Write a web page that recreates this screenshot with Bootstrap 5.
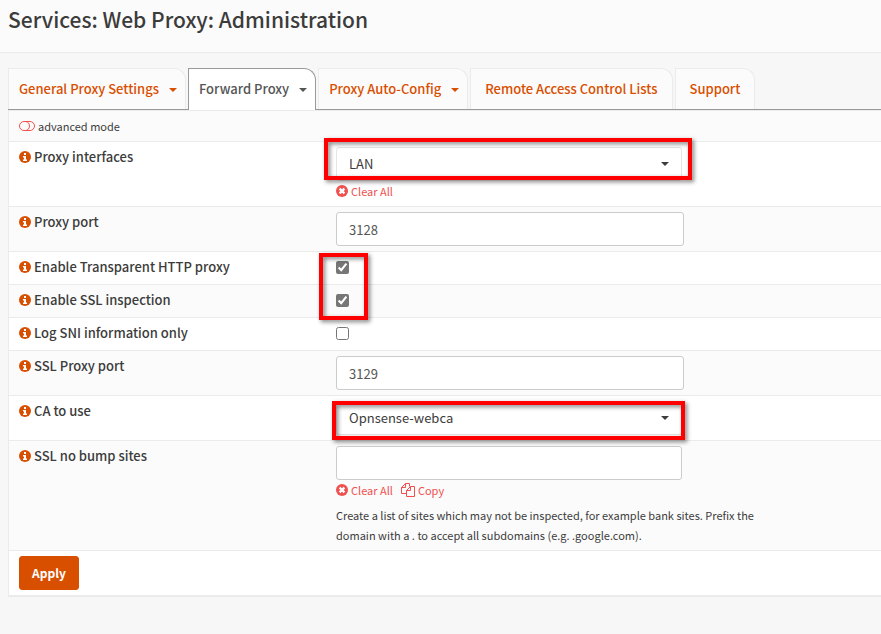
<!DOCTYPE html>
<html lang="en">
<head>
<meta charset="utf-8">
<meta name="viewport" content="width=device-width, initial-scale=1">
<title>Services: Web Proxy: Administration</title>
<link href="https://cdn.jsdelivr.net/npm/bootstrap@5.3.0/dist/css/bootstrap.min.css" rel="stylesheet">
<style>
:root { --brand: #d94f00; --danger-link: #f0504f; --line: #ebebeb; --ink: #3c3c3b; }
body { font-family: "Source Sans Pro", "Noto Sans CJK SC", sans-serif; font-size: 13px; line-height: 20px; color: var(--ink); background: #f7f7f7; overflow-x: hidden; }
.page-head { background: #fbfbfb; border-bottom: 1px solid var(--line); padding: 3px 8px 17px; }
.page-head h1 { font-size: 21px; line-height: 32px; font-weight: 500; }
.page-main { padding: 15px 0 0 8px; }
.page-tabs { gap: 2px; border-bottom: 1px solid #999; }
.page-tabs .nav-link { font-size: 13px; font-weight: 500; line-height: 20px; color: var(--brand); background: #fbfbfb; border: 1px solid var(--line); border-bottom: 0; border-radius: 0 12px 0 0; padding: 10px 14px; margin-bottom: 0; }
.page-tabs .nav-link.dropdown-toggle { padding-left: 10px; padding-right: 8px; }
.page-tabs .nav-link.active { color: #555; background: #fff; border-color: #999; padding-bottom: 11px; margin-bottom: -1px; }
.page-tabs .dropdown-toggle::after { margin-left: 10px; vertical-align: 2px; border-width: 4px 4px 0; }
.panel { background: #fff; border-left: 1px solid var(--line); border-bottom: 2px solid var(--line); }
.settings { --bs-table-bg: transparent; color: var(--ink); }
.settings > tbody > tr > * { padding: 5px 10px; border-top: 1px solid var(--line); border-bottom: 0; font-weight: 400; color: var(--ink); background: none; box-shadow: none; }
.settings > tbody > tr > th { font-weight: 500; }
.settings > tbody > tr:nth-child(odd) { background: #fbfbfb; }
.settings > tbody > tr:nth-child(even) { background: #fff; }
.label-col { width: 317px; }
.icon-row { display: flex; align-items: center; gap: 3px; width: fit-content; }
.small-text, .small-link { font-size: 11px; line-height: 20px; }
.small-link { color: var(--danger-link); text-decoration: none; }
.field { width: 348px; max-width: 100%; }
.field-narrow { width: 346px; }
.field .form-control, .field .form-select { height: 34px; font-size: 13px; line-height: 20px; padding: 6px 12px; color: #555; border: 1px solid #ccc; border-radius: 3px; background-color: #fff; }
.field .form-select { color: var(--ink); border-color: #e5e5e5; background-image: url("data:image/svg+xml,%3Csvg xmlns='http://www.w3.org/2000/svg' viewBox='0 0 8 4'%3E%3Cpath fill='%233c3c3b' d='M0 0h8L4 4z'/%3E%3C/svg%3E"); background-size: 8px 4px; background-position: right 12px center; }
.tick { height: 22px; padding-bottom: 1px; }
.tick input { width: 13px; height: 13px; margin: 0; accent-color: #767676; }
.callout-box { position: absolute; border: 4px solid #f00; filter: drop-shadow(2px 2px 2px rgba(0,0,0,.5)); pointer-events: none; }
.callout-lan { inset: -9px -10px 1px -12px; }
.callout-ticks { top: -4px; left: -17px; width: 49px; height: 67px; }
.callout-ca { inset: 0 -3px -5px -4px; }
.help-text { max-width: 425px; margin-top: 5px; }
.btn-apply { --bs-btn-bg: #d94f00; --bs-btn-border-color: #d94f00; --bs-btn-color: #fff; --bs-btn-hover-bg: #b84300; --bs-btn-hover-color: #fff; --bs-btn-font-size: 12px; --bs-btn-font-weight: 700; --bs-btn-line-height: 20px; --bs-btn-padding-y: 6px; --bs-btn-padding-x: 12px; --bs-btn-border-radius: 3px; display: block; }
svg { flex: none; }
</style>
<script src="https://cdn.jsdelivr.net/npm/bootstrap@5.3.0/dist/js/bootstrap.bundle.min.js"></script>
</head>
<body>
<svg class="d-none" aria-hidden="true">
  <symbol id="i-info" viewBox="0 0 12 12"><circle cx="6" cy="6" r="6" fill="#d94f00"/><path fill="#fff" d="M5 2h2v2H5zM4 5h3v3.500h1V10H4V8.500h1v-2H4z"/></symbol>
  <symbol id="i-clear" viewBox="0 0 12 12"><circle cx="6" cy="6" r="6" fill="#f0504f"/><path stroke="#fff" stroke-width="2.200" d="M3.600 3.600l4.800 4.800M8.400 3.600L3.600 8.400"/></symbol>
  <symbol id="i-copy" viewBox="0 0 14 14"><g fill="none" stroke="#f0504f"><path d="M5.500 10.500h-5v-6l4-4h4v3M4.500.5v4h-4M9.500 3.500h4v10h-8v-6zM9.500 3.500v4h-4"/></g></symbol>
  <symbol id="i-toggle" viewBox="0 0 16 10"><g fill="none" stroke="#f0504f"><rect x=".5" y=".5" width="15" height="9" rx="4.500"/><path d="M5.500.5h1a4 4.500 0 0 1 0 9h-1"/></g></symbol>
</svg>

<header class="page-head"><h1 class="m-0">Services: Web Proxy: Administration</h1></header>

<main class="page-main">
  <ul class="nav nav-tabs page-tabs">
    <li class="nav-item dropdown"><a class="nav-link dropdown-toggle" href="#" role="button" data-bs-toggle="dropdown">General Proxy Settings</a></li>
    <li class="nav-item dropdown"><a class="nav-link dropdown-toggle active" href="#" role="button" aria-current="page" data-bs-toggle="dropdown">Forward Proxy</a></li>
    <li class="nav-item dropdown"><a class="nav-link dropdown-toggle" href="#" role="button" data-bs-toggle="dropdown">Proxy Auto-Config</a></li>
    <li class="nav-item"><a class="nav-link" href="#">Remote Access Control Lists</a></li>
    <li class="nav-item"><a class="nav-link" href="#">Support</a></li>
  </ul>

  <form class="panel">
    <table class="table settings m-0">
      <colgroup><col class="label-col"><col></colgroup>
      <tbody>
        <tr><td colspan="2"><a href="#" class="icon-row small-text text-reset text-decoration-none"><svg width="16" height="10"><use href="#i-toggle"/></svg>advanced mode</a></td></tr>
        <tr>
          <th scope="row"><label class="icon-row" for="ifs"><svg width="12" height="12"><use href="#i-info"/></svg>Proxy interfaces</label></th>
          <td>
            <div class="field field-narrow position-relative"><select id="ifs" class="form-select"><option>LAN</option></select><span class="callout-box callout-lan"></span></div>
            <a href="#" class="small-link icon-row"><svg width="12" height="12"><use href="#i-clear"/></svg>Clear All</a>
          </td>
        </tr>
        <tr>
          <th scope="row"><label class="icon-row" for="port"><svg width="12" height="12"><use href="#i-info"/></svg>Proxy port</label></th>
          <td><div class="field"><input id="port" class="form-control" type="text" value="3128"></div></td>
        </tr>
        <tr>
          <th scope="row"><label class="icon-row" for="transparent"><svg width="12" height="12"><use href="#i-info"/></svg>Enable Transparent HTTP proxy</label></th>
          <td><div class="tick position-relative d-flex align-items-center"><input id="transparent" type="checkbox" checked><span class="callout-box callout-ticks"></span></div></td>
        </tr>
        <tr>
          <th scope="row"><label class="icon-row" for="ssl"><svg width="12" height="12"><use href="#i-info"/></svg>Enable SSL inspection</label></th>
          <td><div class="tick d-flex align-items-center"><input id="ssl" type="checkbox" checked></div></td>
        </tr>
        <tr>
          <th scope="row"><label class="icon-row" for="sni"><svg width="12" height="12"><use href="#i-info"/></svg>Log SNI information only</label></th>
          <td><div class="tick d-flex align-items-center"><input id="sni" type="checkbox"></div></td>
        </tr>
        <tr>
          <th scope="row"><label class="icon-row" for="sslport"><svg width="12" height="12"><use href="#i-info"/></svg>SSL Proxy port</label></th>
          <td><div class="field"><input id="sslport" class="form-control" type="text" value="3129"></div></td>
        </tr>
        <tr>
          <th scope="row"><label class="icon-row" for="ca"><svg width="12" height="12"><use href="#i-info"/></svg>CA to use</label></th>
          <td><div class="field field-narrow position-relative"><select id="ca" class="form-select"><option>Opnsense-webca</option></select><span class="callout-box callout-ca"></span></div></td>
        </tr>
        <tr>
          <th scope="row"><label class="icon-row" for="nobump"><svg width="12" height="12"><use href="#i-info"/></svg>SSL no bump sites</label></th>
          <td>
            <div class="field field-narrow"><input id="nobump" class="form-control" type="text"></div>
            <div class="d-flex gap-2">
              <a href="#" class="small-link icon-row"><svg width="12" height="12"><use href="#i-clear"/></svg>Clear All</a>
              <a href="#" class="small-link icon-row"><svg width="14" height="14"><use href="#i-copy"/></svg>Copy</a>
            </div>
            <div class="small-text help-text">Create a list of sites which may not be inspected, for example bank sites. Prefix the domain with a . to accept all subdomains (e.g. .google.com).</div>
          </td>
        </tr>
        <tr><td colspan="2"><button class="btn btn-apply" type="button">Apply</button></td></tr>
      </tbody>
    </table>
  </form>
</main>
</body>
</html>
